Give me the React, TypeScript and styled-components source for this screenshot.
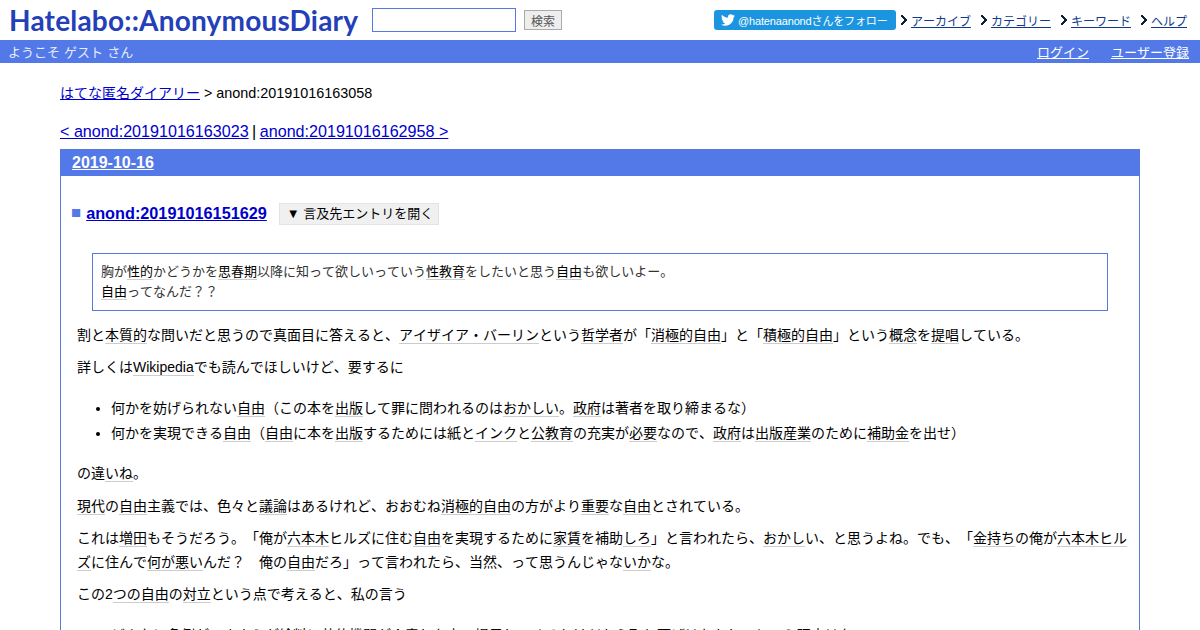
import React from "react";
import styled, { createGlobalStyle } from "styled-components";
import { FaTwitter } from "react-icons/fa";

const GlobalStyle = createGlobalStyle`
  html, body {
    margin: 0;
    padding: 0;
    height: 630px;
    overflow: hidden;
    background: #fff;
    font-family: "Liberation Sans", "Noto Sans CJK JP", sans-serif;
    font-size: 14px;
    color: #000;
    text-spacing-trim: space-all;
  }
`;

const TopBar = styled.div`
  display: flex;
  justify-content: space-between;
  align-items: center;
  height: 40px;
  padding: 0 13px 0 9px;
`;

const LeftGroup = styled.div`
  display: flex;
  align-items: center;
`;

const Logo = styled.div`
  width: 351px;
  font-family: "Lato", sans-serif;
  font-size: 28px;
  font-weight: 700;
  letter-spacing: 0.2px;
  color: #2440b8;
  white-space: nowrap;
`;

const SearchInput = styled.input`
  box-sizing: border-box;
  width: 144px;
  height: 24px;
  margin: 0 8px 0 12px;
  border: 1px solid #5279e7;
  background: #fff;
`;

const SearchButton = styled.button`
  box-sizing: border-box;
  width: 38px;
  height: 20px;
  padding: 0;
  border: 1px solid #aaa;
  background: #eee;
  color: #555;
  font-family: inherit;
  font-size: 12px;
`;

const RightGroup = styled.div`
  display: flex;
  align-items: center;
  font-kerning: none;
`;

const FollowButton = styled.div`
  display: flex;
  align-items: center;
  gap: 3px;
  box-sizing: border-box;
  width: 182px;
  height: 20px;
  padding-left: 7px;
  margin-right: 5px;
  border-radius: 3px;
  background: #1b95e0;
  color: #fff;
  font-size: 11px;
  letter-spacing: -0.15px;
  white-space: nowrap;
`;

const NavLink = styled.a`
  display: flex;
  align-items: center;
  gap: 4px;
  margin-left: 10px;
  color: #0f3a8c;
  font-size: 12px;
  text-decoration: underline;
  &:first-of-type {
    margin-left: 0;
  }
`;

const Chevron = styled.svg`
  width: 6px;
  height: 10px;
  flex: none;
`;

const SubBar = styled.div`
  display: flex;
  justify-content: space-between;
  align-items: center;
  height: 23px;
  padding: 0 11px 0 8px;
  background: #5279e7;
  color: #e6ecfb;
  font-size: 13px;
  font-kerning: none;
  word-spacing: 0.5px;
`;

const SubLinks = styled.div`
  display: flex;
  gap: 22px;
`;

const SubLink = styled.a`
  color: #fff;
  text-decoration: underline;
`;

const Main = styled.div`
  padding: 0 60px;
`;

const Breadcrumb = styled.div`
  margin-top: 21px;
  font-size: 14px;
  font-kerning: none;
  line-height: 18px;
`;

const EntryId = styled.span`
  font-size: 14.4px;
`;

const BlueLink = styled.a`
  color: #0000cc;
  text-decoration: underline;
`;

const Pager = styled.div`
  margin-top: 20px;
  font-size: 16.13px;
  line-height: 19px;
`;

const Separator = styled.span`
  margin: 0 -1px;
`;

const Day = styled.div`
  margin-top: 8px;
  border: 1px solid #5a78d8;
  border-bottom: none;
  height: 600px;
`;

const DayHeader = styled.div`
  height: 26px;
  padding-left: 11px;
  background: #5279e7;
  font-size: 16px;
  font-weight: 700;
  line-height: 25px;
  a {
    color: #fff;
    text-decoration: underline;
  }
`;

const Section = styled.div`
  padding: 0 11px 0 16px;
`;

const TitleRow = styled.div`
  display: flex;
  align-items: center;
  margin: 26px 0 0 -5px;
  height: 22px;
`;

const Square = styled.span`
  color: #5279e7;
  font-size: 16.8px;
  font-weight: 700;
  margin: 0 5px 0 -1px;
`;

const EntryLink = styled.a`
  color: #0000cc;
  font-size: 16.25px;
  font-weight: 700;
  text-decoration: underline;
`;

const ToggleButton = styled.div`
  box-sizing: border-box;
  width: 160px;
  height: 22px;
  margin: 2px 0 0 12px;
  padding-left: 7px;
  border: 1px solid #e4e4e4;
  background: #f0f0f0;
  font-size: 13px;
  font-kerning: none;
  line-height: 20px;
  white-space: nowrap;
`;

const Quote = styled.blockquote`
  margin: 29px 20px 12.5px 15px;
  padding: 8px;
  border: 1px solid #5a78d8;
  color: #333;
  font-size: 13px;
  font-kerning: none;
  line-height: 20px;
`;

const Para = styled.p`
  margin: 0 0 9.6px;
  font-kerning: none;
  line-height: 23.04px;
`;

const Bullets = styled.ul`
  margin: 18px 0 17px;
  padding-left: 34px;
  font-kerning: none;
  line-height: 23.04px;
`;

const Item = styled.li`
  margin-bottom: 1.9px;
  &:last-child {
    margin-bottom: 0;
  }
`;

const Keyword = styled.a`
  color: #000;
  text-decoration: none;
  border-bottom: 1px solid #ccc;
`;

const K = ({ children }: { children: React.ReactNode }) => <Keyword>{children}</Keyword>;

const Arrow = () => (
  <Chevron viewBox="0 0 6 10">
    <path d="M0 0h2v1h1v1h1v1h1v1h1v2H5v1H4v1H3v1H2v1H0V8h1V7h1V6h1V4H2V3H1V2H0z" fill="#123" />
  </Chevron>
);

const App: React.FC = () => {
  return (
    <>
      <GlobalStyle />
      <TopBar>
        <LeftGroup>
          <Logo>Hatelabo::AnonymousDiary</Logo>
          <SearchInput type="text" />
          <SearchButton>検索</SearchButton>
        </LeftGroup>
        <RightGroup>
          <FollowButton>
            <FaTwitter size={14} />
            @hatenaanondさんをフォロー
          </FollowButton>
          <NavLink><Arrow />アーカイブ</NavLink>
          <NavLink><Arrow />カテゴリー</NavLink>
          <NavLink><Arrow />キーワード</NavLink>
          <NavLink><Arrow />ヘルプ</NavLink>
        </RightGroup>
      </TopBar>
      <SubBar>
        <span>ようこそ ゲスト さん</span>
        <SubLinks>
          <SubLink>ログイン</SubLink>
          <SubLink>ユーザー登録</SubLink>
        </SubLinks>
      </SubBar>
      <Main>
        <Breadcrumb>
          <BlueLink>はてな匿名ダイアリー</BlueLink> <EntryId>&gt; anond:20191016163058</EntryId>
        </Breadcrumb>
        <Pager>
          <BlueLink>&lt; anond:20191016163023</BlueLink> <Separator>|</Separator> <BlueLink>anond:20191016162958 &gt;</BlueLink>
        </Pager>
        <Day>
          <DayHeader><a>2019-10-16</a></DayHeader>
          <Section>
            <TitleRow>
              <Square>■</Square>
              <EntryLink>anond:20191016151629</EntryLink>
              <ToggleButton>▼ 言及先エントリを開く</ToggleButton>
            </TitleRow>
            <Quote>
              胸が<K>性的</K>かどうかを<K>思春期</K>以降に知って欲しいっていう<K>性教育</K>をしたいと思う<K>自由</K>も欲しいよー。
              <br />
              <K>自由</K>ってなんだ？？
            </Quote>
            <Para>
              割と<K>本質的</K>な問いだと思うので真面目に答えると、<K>アイザイア・バーリン</K>という<K>哲学者</K>が「<K>消極的自由</K>」と「<K>積極的自由</K>」という<K>概念</K>を<K>提唱</K>している。
            </Para>
            <Para>
              詳しくは<K>Wikipedia</K>でも読んでほしいけど、要するに
            </Para>
            <Bullets>
              <Item>何かを妨げられない<K>自由</K>（この本を<K>出版</K>して罪に問われるのは<K>おかしい</K>。<K>政府</K>は著者を取り締まるな）</Item>
              <Item>何かを実現できる<K>自由</K>（<K>自由</K>に本を<K>出版</K>するためには紙と<K>インク</K>と<K>公教育</K>の充実が<K>必要</K>なので、<K>政府</K>は<K>出版産業</K>のために<K>補助金</K>を出せ）</Item>
            </Bullets>
            <Para>
              の違<K>いね</K>。
            </Para>
            <Para>
              <K>現代</K>の<K>自由</K>主義では、色々と<K>議論</K>はあるけれど、おおむね<K>消極的自由</K>の方がより<K>重要</K>な<K>自由</K>とされている。
            </Para>
            <Para>
              これは<K>増田</K>もそうだろう。「俺が<K>六本木</K>ヒルズに住む<K>自由</K>を実現するために<K>家賃</K>を補助<K>しろ</K>」と言われたら、<K>おかし</K>い、と思うよね。でも、「<K>金持ち</K>の俺が<K>六本木ヒル</K><K>ズ</K>に住んで<K>何が悪い</K>んだ？　俺の<K>自由</K>だろ」って言われたら、当然、って思うんじゃな<K>いか</K>な。
            </Para>
            <Para>
              この2<K>つの自由</K>の<K>対立</K>という点で考えると、私の言う
            </Para>
            <Bullets>
              <Item>どんなに条例ができようが給料に共依機関が介意した上で提示してくるわけだから取り下げはおかしいという理由はない</Item>
            </Bullets>
          </Section>
        </Day>
      </Main>
    </>
  );
};

export default App;
